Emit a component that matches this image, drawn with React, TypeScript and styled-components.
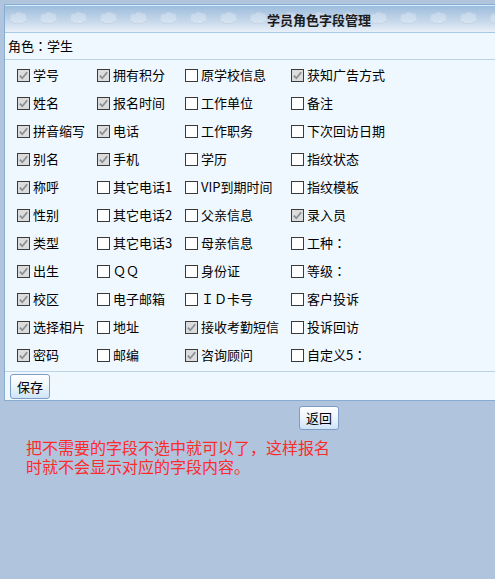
import React from 'react'
import styled, { createGlobalStyle } from 'styled-components'

const GlobalStyle = createGlobalStyle`
  html, body {
    margin: 0;
    padding: 0;
    background: #b0c4de;
    overflow: hidden;
  }
  body {
    font-family: "Noto Sans CJK SC", "Noto Sans", sans-serif;
    font-size: 13px;
    color: #000;
  }
`

const cloudSvg = `<svg xmlns='http://www.w3.org/2000/svg' width='30' height='27'><path d='M8 19 C5 19 4 16 6 14.5 C5 12 8 10 10 11.5 C11 9 16 9 17 11 C19.5 10 22 12 21 14.5 C23 16 21.5 19.5 19 18.5 C18 21 13.5 21 12.5 19.5 C11 21 8.5 21 8 19 Z' fill='%23eef3f9' fill-opacity='0.35' stroke='%23c3d3e3' stroke-width='1'/></svg>`

const Page = styled.div`
  padding: 4px 0 0 4px;
  width: 630px;
`

const Panel = styled.div`
  border: 1px solid #86acd2;
  background: #f0f8ff;
`

const Header = styled.div`
  height: 26px;
  border-top: 1px solid #d4ecfa;
  border-bottom: 1px solid #a9c8e4;
  background-image: url("data:image/svg+xml,${encodeURIComponent(cloudSvg).replace(/%2523/g, '%23')}"),
    linear-gradient(to bottom, #9dbddd 0%, #c3d6ea 55%, #e9f0f8 100%);
  background-repeat: repeat-x, no-repeat;
  background-position: 0 -3px, 0 0;
  display: flex;
  align-items: center;
  justify-content: center;
`

const Title = styled.span`
  font-weight: bold;
  font-size: 13px;
  color: #1c1c1c;
`

const RoleRow = styled.div`
  height: 26px;
  line-height: 26px;
  padding-left: 3px;
  border-bottom: 1px solid #bcd3e6;
`

/* full-width colon drawn centred, as in the original UI font */
const Colon = styled.span`
  font-family: "Noto Sans CJK TC", "Noto Sans CJK SC", sans-serif;
`

const FieldGrid = styled.div`
  display: grid;
  grid-template-columns: 80px 88px 106px auto;
  grid-auto-rows: 28px;
  padding: 1px 0 2px 12px;
  border-bottom: 1px solid #bcd3e6;
`

const Field = styled.label`
  display: flex;
  align-items: center;
  gap: 3px;
  white-space: nowrap;
  line-height: 16px;
`

const Box = styled.span<{ $checked: boolean }>`
  box-sizing: border-box;
  width: 13px;
  height: 13px;
  border: 1px solid #3a3a3a;
  background: ${p => (p.$checked ? '#dcdcdc' : '#ffffff')};
  display: flex;
  align-items: center;
  justify-content: center;
  flex-shrink: 0;
`

const Footer = styled.div`
  padding: 2px 5px 1px 5px;
`

const Button = styled.button`
  box-sizing: border-box;
  height: 25px;
  padding: 0 6px;
  border: 1px solid #7c9ec6;
  border-radius: 3px;
  background: linear-gradient(to bottom, #ffffff 0%, #eef6fd 45%, #cfe4f8 100%);
  font-family: "Noto Sans CJK SC", sans-serif;
  font-size: 13px;
  line-height: 21px;
  color: #000;
  cursor: pointer;
`

const BackRow = styled.div`
  display: flex;
  justify-content: center;
  padding-top: 5px;
`

const BackButton = styled(Button)`
  height: 24px;
  line-height: 20px;
`

const Note = styled.div`
  width: 312px;
  margin: 8px 0 0 22px;
  color: #ff2a2a;
  font-size: 16px;
  line-height: 19px;
`

type FieldItem = [string, boolean]

const rows: FieldItem[][] = [
  [['学号', true], ['拥有积分', true], ['原学校信息', false], ['获知广告方式', true]],
  [['姓名', true], ['报名时间', true], ['工作单位', false], ['备注', false]],
  [['拼音缩写', true], ['电话', true], ['工作职务', false], ['下次回访日期', false]],
  [['别名', true], ['手机', true], ['学历', false], ['指纹状态', false]],
  [['称呼', true], ['其它电话1', false], ['VIP到期时间', false], ['指纹模板', false]],
  [['性别', true], ['其它电话2', false], ['父亲信息', false], ['录入员', true]],
  [['类型', true], ['其它电话3', false], ['母亲信息', false], ['工种：', false]],
  [['出生', true], ['ＱＱ', false], ['身份证', false], ['等级：', false]],
  [['校区', true], ['电子邮箱', false], ['ＩＤ卡号', false], ['客户投诉', false]],
  [['选择相片', true], ['地址', false], ['接收考勤短信', true], ['投诉回访', false]],
  [['密码', true], ['邮编', false], ['咨询顾问', true], ['自定义5：', false]],
]

function withColon(text: string) {
  if (!text.endsWith('：')) return text
  return (
    <>
      {text.slice(0, -1)}
      <Colon>：</Colon>
    </>
  )
}

function CheckBox({ checked }: { checked: boolean }) {
  return (
    <Box $checked={checked}>
      {checked ? (
        <svg width="11" height="11" viewBox="0 0 11 11">
          <path d="M1.8 5.6 L4.3 8.2 L9.2 2.2" fill="none" stroke="#8a8f98" strokeWidth="1.8" />
        </svg>
      ) : null}
    </Box>
  )
}

export default function App() {
  return (
    <>
      <GlobalStyle />
      <Page>
        <Panel>
          <Header>
            <Title>学员角色字段管理</Title>
          </Header>
          <RoleRow>
            角色<Colon>：</Colon>学生
          </RoleRow>
          <FieldGrid>
            {rows.flat().map(([name, checked], i) => (
              <Field key={i}>
                <CheckBox checked={checked} />
                <span>{withColon(name)}</span>
              </Field>
            ))}
          </FieldGrid>
          <Footer>
            <Button>保存</Button>
          </Footer>
        </Panel>
        <BackRow>
          <BackButton>返回</BackButton>
        </BackRow>
        <Note>把不需要的字段不选中就可以了，这样报名时就不会显示对应的字段内容。</Note>
      </Page>
    </>
  )
}
